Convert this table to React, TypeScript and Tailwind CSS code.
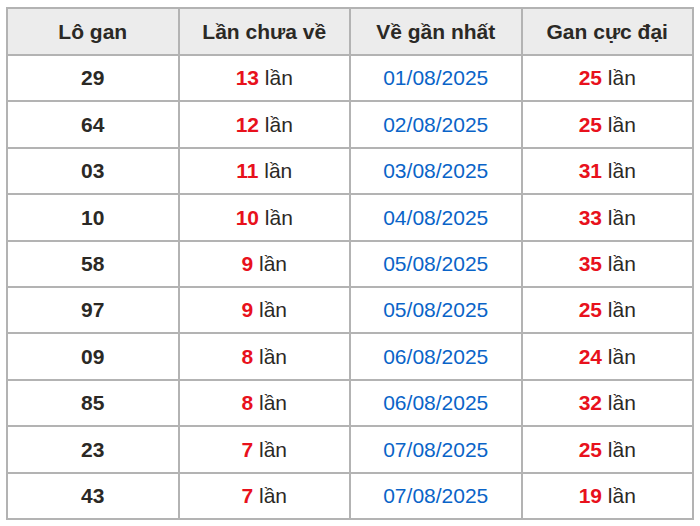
const rows: [string, number, string, number][] = [
  ["29", 13, "01/08/2025", 25],
  ["64", 12, "02/08/2025", 25],
  ["03", 11, "03/08/2025", 31],
  ["10", 10, "04/08/2025", 33],
  ["58", 9, "05/08/2025", 35],
  ["97", 9, "05/08/2025", 25],
  ["09", 8, "06/08/2025", 24],
  ["85", 8, "06/08/2025", 32],
  ["23", 7, "07/08/2025", 25],
  ["43", 7, "07/08/2025", 19],
];

const headers = ["Lô gan", "Lần chưa về", "Về gần nhất", "Gan cực đại"];

export default function App() {
  return (
    <div className="w-[700px] h-[526px] bg-white pl-[6px] pt-[7px] font-['Liberation_Sans',Arial,sans-serif] text-[21px] text-[#2b2925]">
      <table className="w-[688px] border-collapse table-fixed border-2 border-[#b3b3b3]">
        <thead>
          <tr className="h-[47px] bg-[#ececec]">
            {headers.map((h) => (
              <th key={h} className="border-2 border-[#b3b3b3] font-bold text-center">
                {h}
              </th>
            ))}
          </tr>
        </thead>
        <tbody>
          {rows.map(([lo, miss, date, max], i) => (
            <tr key={i} className="h-[46.4px]">
              <td className="border-2 border-[#b3b3b3] text-center font-bold">{lo}</td>
              <td className="border-2 border-[#b3b3b3] text-center">
                <span className="font-bold text-[#e8111c]">{miss}</span> lần
              </td>
              <td className="border-2 border-[#b3b3b3] text-center text-[#0a64c8]">{date}</td>
              <td className="border-2 border-[#b3b3b3] text-center">
                <span className="font-bold text-[#e8111c]">{max}</span> lần
              </td>
            </tr>
          ))}
        </tbody>
      </table>
    </div>
  );
}
